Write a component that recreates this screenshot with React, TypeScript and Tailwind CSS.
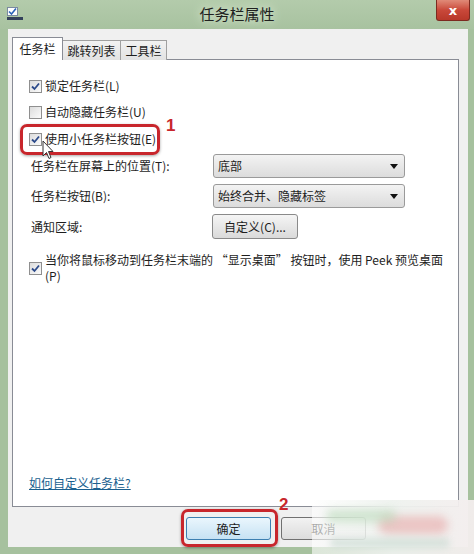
const cjk = { fontFamily: '"Noto Sans CJK SC", "Noto Sans", sans-serif' }

function Check({ checked }: { checked: boolean }) {
  return (
    <span className="flex h-[13px] w-[13px] shrink-0 items-center justify-center border border-[#8f8f8f] bg-gradient-to-br from-[#dcdcdc] to-[#fbfbfb]">
      {checked && (
        <svg width="9" height="9" viewBox="0 0 9 9">
          <path d="M1 4.5 L3.5 7 L8 1.5" fill="none" stroke="#2c4a8a" strokeWidth="1.8" />
        </svg>
      )}
    </span>
  )
}

function CheckRow({ label, checked }: { label: string; checked: boolean }) {
  return (
    <div className="flex h-[20px] items-center gap-[3px]">
      <Check checked={checked} />
      <span className="text-[12px] text-[#1e1e1e]">{label}</span>
    </div>
  )
}

function Select({ value }: { value: string }) {
  return (
    <div className="flex h-[24px] w-[192px] items-center justify-between rounded-[3px] border border-[#9a9a9a] bg-gradient-to-b from-[#f3f3f3] to-[#dcdcdc] pl-[4px] pr-[6px]">
      <span className="text-[12px] text-[#1e1e1e]">{value}</span>
      <svg width="8" height="5" viewBox="0 0 8 5">
        <path d="M0 0 H8 L4 5 Z" fill="#111" />
      </svg>
    </div>
  )
}

export default function App() {
  return (
    <div className="relative flex h-[554px] w-[474px] flex-col overflow-hidden bg-[#a6c19e]" style={cjk}>
      {/* title bar */}
      <div className="relative flex h-[29px] items-center justify-center bg-gradient-to-b from-[#b3cbab] to-[#a8c2a0]">
        <div className="absolute left-[7px] top-[7px] h-[13px] w-[16px]">
          <div className="h-[9px] w-[11px] border border-[#7a8aa0] bg-white">
            <svg width="9" height="7" viewBox="0 0 9 7">
              <path d="M1 3.5 L3.5 6 L8 0.5" fill="none" stroke="#2a64b8" strokeWidth="1.6" />
            </svg>
          </div>
          <div className="mt-px h-[3px] w-[16px] bg-[#33405a]" />
        </div>
        <span className="text-[15px] text-[#202020] [text-shadow:0_0_8px_#d4e4cc,0_0_12px_#d4e4cc]">任务栏属性</span>
        <div className="absolute right-[4px] top-0 flex h-[21px] w-[34px] items-center justify-center rounded-b-[3px] border border-t-0 border-[#7c2a20] bg-gradient-to-b from-[#e08a78] via-[#c9483a] to-[#b8382a]">
          <span className="text-[13px] font-bold leading-none text-white" style={{ fontFamily: '"DejaVu Sans", sans-serif' }}>x</span>
        </div>
      </div>

      {/* body */}
      <div className="ml-[8px] mr-[6px] flex h-[518px] flex-col bg-[#f0f0f0] pl-[4px] pr-[9px] pt-[8px]">
        <div className="relative z-10 -mb-px flex items-end">
          <div className="flex h-[23px] w-[51px] items-center justify-center border border-b-0 border-[#898c95] bg-white text-[12px] text-[#1e1e1e]">任务栏</div>
          <div className="flex h-[20px] w-[58px] items-center justify-center border border-b-0 border-l-0 border-[#a0a0a0] bg-gradient-to-b from-[#f2f2f2] to-[#e2e2e2] text-[12px] text-[#1e1e1e]">跳转列表</div>
          <div className="flex h-[20px] w-[46px] items-center justify-center border border-b-0 border-l-0 border-[#a0a0a0] bg-gradient-to-b from-[#f2f2f2] to-[#e2e2e2] text-[12px] text-[#1e1e1e]">工具栏</div>
        </div>
        <div className="flex h-[448px] flex-col border border-[#898c95] bg-white pl-[16px] pt-[16px]">
          <div className="flex flex-col gap-[6px]">
            <CheckRow label="锁定任务栏(L)" checked />
            <CheckRow label="自动隐藏任务栏(U)" checked={false} />
            <div className="mt-px">
              <CheckRow label="使用小任务栏按钮(E)" checked />
            </div>
          </div>
          <div className="mt-[5px] flex flex-col gap-[6px] pl-[2px] text-[12px] text-[#1e1e1e]">
            <div className="flex items-center">
              <span className="w-[182px]">任务栏在屏幕上的位置(T):</span>
              <Select value="底部" />
            </div>
            <div className="flex items-center">
              <span className="w-[182px]">任务栏按钮(B):</span>
              <Select value="始终合并、隐藏标签" />
            </div>
            <div className="flex items-center">
              <span className="w-[181px]">通知区域:</span>
              <div className="flex h-[25px] w-[86px] items-center justify-center rounded-[3px] border border-[#8a8a8a] bg-gradient-to-b from-[#f5f5f5] to-[#dadada]">自定义(C)...</div>
            </div>
          </div>
          <div className="mt-[13px] flex items-center gap-[3px]">
            <Check checked />
            <div className="flex flex-col text-[12px] leading-[16px] text-[#1e1e1e]">
              <span>当你将鼠标移动到任务栏末端的 “显示桌面” 按钮时，使用 Peek 预览桌面</span>
              <span>(P)</span>
            </div>
          </div>
          <div className="flex-1" />
          <a className="mb-[14px] text-[12px] text-[#1a5f8f] underline">如何自定义任务栏?</a>
        </div>
        <div className="mt-[10px] flex gap-[10px] pl-[174px]">
          <div className="flex h-[23px] w-[85px] items-center justify-center rounded-[3px] border border-[#3c7fb1] bg-gradient-to-b from-[#eaf6fd] to-[#c6e2f3] text-[12px] text-[#1e1e1e]">确定</div>
          <div className="flex h-[23px] w-[85px] items-center justify-center rounded-[3px] border border-[#707070] bg-gradient-to-b from-[#f2f2f2] to-[#dcdcdc] text-[12px] text-[#1e1e1e]">取消</div>
        </div>
      </div>

      {/* annotations */}
      <div className="absolute left-[20px] top-[124px] h-[31px] w-[140px] rounded-[7px] border-[3px] border-[#c8262c] shadow-[0_1px_3px_rgba(0,0,0,0.35)]" />
      <span className="absolute left-[166px] top-[113px] text-[17px] font-bold text-[#c8262c]" style={{ fontFamily: '"Liberation Sans", sans-serif' }}>1</span>
      <svg className="absolute left-[42px] top-[140px]" width="12" height="20" viewBox="0 0 12 20">
        <path d="M1 1 L1 16 L4.5 12.5 L7 18.5 L9 17.5 L6.5 11.5 L11 11.5 Z" fill="#fff" stroke="#333" strokeWidth="1" />
      </svg>
      <div className="absolute left-[181px] top-[509px] h-[38px] w-[97px] rounded-[7px] border-[3px] border-[#c8262c] shadow-[0_1px_3px_rgba(0,0,0,0.35)]" />
      <span className="absolute left-[279px] top-[492px] text-[17px] font-bold text-[#c8262c]" style={{ fontFamily: '"Liberation Sans", sans-serif' }}>2</span>

      {/* watermark smear */}
      <div className="absolute left-[312px] top-[500px] h-[54px] w-[162px] bg-gradient-to-r from-white/60 via-[#eef2ee]/95 to-[#f4eeee]/95" />
      <div className="absolute left-[378px] top-[516px] h-[18px] w-[70px] rounded-full bg-[#e8a8a8]/60 blur-[4px]" />
      <div className="absolute left-[326px] top-[510px] h-[12px] w-[70px] rounded-full bg-[#b8d8b8]/60 blur-[4px]" />
      <div className="absolute left-[330px] top-[538px] h-[10px] w-[120px] rounded-full bg-[#c8d8d0]/60 blur-[3px]" />
    </div>
  )
}
